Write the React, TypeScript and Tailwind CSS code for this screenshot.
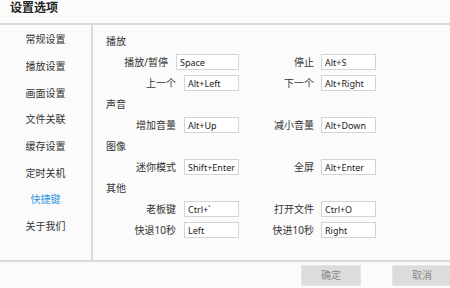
import React from "react";

const font = { fontFamily: '"Noto Sans", "Noto Sans CJK SC", sans-serif' };

const menu = ["常规设置", "播放设置", "画面设置", "文件关联", "缓存设置", "定时关机", "快捷键", "关于我们"];

type Row = { kind: "h"; text: string } | { kind: "r"; l: string; lv: string; lw?: string; r: string; rv: string };

const rows: Row[] = [
  { kind: "h", text: "播放" },
  { kind: "r", l: "播放/暂停", lv: "Space", lw: "w-[63px]", r: "停止", rv: "Alt+S" },
  { kind: "r", l: "上一个", lv: "Alt+Left", r: "下一个", rv: "Alt+Right" },
  { kind: "h", text: "声音" },
  { kind: "r", l: "增加音量", lv: "Alt+Up", r: "减小音量", rv: "Alt+Down" },
  { kind: "h", text: "图像" },
  { kind: "r", l: "迷你模式", lv: "Shift+Enter", r: "全屏", rv: "Alt+Enter" },
  { kind: "h", text: "其他" },
  { kind: "r", l: "老板键", lv: "Ctrl+`", r: "打开文件", rv: "Ctrl+O" },
  { kind: "r", l: "快退10秒", lv: "Left", r: "快进10秒", rv: "Right" },
];

function Box({ v, w }: { v: string; w?: string }) {
  return (
    <div className={`${w ?? "w-[55px]"} h-[16px] bg-white border border-[#d4d4d4] pl-[3px] flex items-center text-[9px] text-[#222] leading-none overflow-hidden whitespace-nowrap`}>
      {v}
    </div>
  );
}

export default function App() {
  return (
    <div className="w-[450px] h-[288px] bg-[#fbfbfb] flex flex-col overflow-hidden text-[#333]" style={font}>
      <div className="h-[25px] shrink-0 border-b-2 border-[#dadada] pl-[10px] flex items-start">
        <span className="text-[12px] font-bold leading-[15px] text-[#222]">设置选项</span>
      </div>
      <div className="flex flex-1 min-h-0">
        <div className="w-[93px] shrink-0 border-r-2 border-[#dadada] pt-[1px] flex flex-col">
          {menu.map((m) => (
            <div
              key={m}
              className={`h-[26.7px] flex items-center justify-center text-[10px] leading-none ${m === "快捷键" ? "text-[#2f9ae2]" : "text-[#333]"}`}
            >
              {m}
            </div>
          ))}
        </div>
        <div className="flex-1 pt-[5.5px] flex flex-col">
          {rows.map((row, i) =>
            row.kind === "h" ? (
              <div key={i} className="h-[21px] pl-[13px] flex items-center text-[10px] leading-none">
                {row.text}
              </div>
            ) : (
              <div key={i} className="h-[21px] flex items-center text-[10px] leading-none">
                <div className="w-[146px] flex items-center">
                  <div className="w-[83px] text-right">{row.l}</div>
                  <div className="ml-[8px]">
                    <Box v={row.lv} w={row.lw} />
                  </div>
                </div>
                <div className="flex items-center">
                  <div className="w-[75px] text-right">{row.r}</div>
                  <div className="ml-[7px]">
                    <Box v={row.rv} />
                  </div>
                </div>
              </div>
            )
          )}
        </div>
      </div>
      <div className="h-[28px] shrink-0 border-t-2 border-[#dadada] flex justify-end items-start pt-[3px] gap-[31px] mr-[-2px]">
        <div className="w-[60px] h-[21px] bg-[#dcdcdc] border border-[#e4e4e4] flex items-center justify-center text-[10px] text-[#8a8a8a]">
          确定
        </div>
        <div className="w-[60px] h-[21px] bg-[#dcdcdc] border border-[#e4e4e4] flex items-center justify-center text-[10px] text-[#8a8a8a]">
          取消
        </div>
      </div>
    </div>
  );
}
